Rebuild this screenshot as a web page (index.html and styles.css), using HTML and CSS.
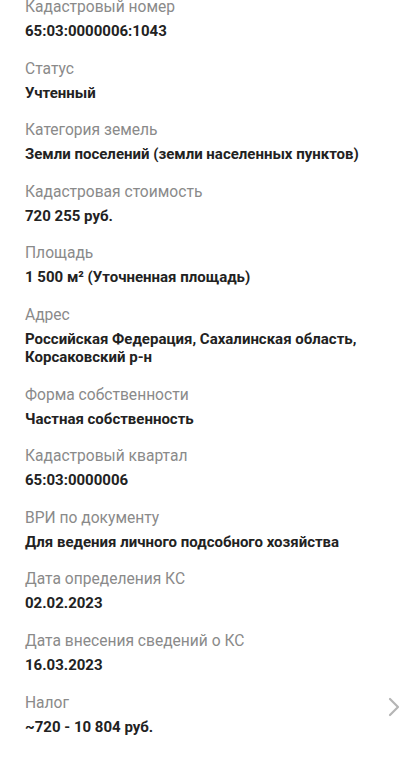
FILE: index.html
```html
<!DOCTYPE html>
<html lang="ru">
<head>
<meta charset="utf-8">
<link rel="stylesheet" href="styles.css">
</head>
<body>
<div class="list">
  <div class="item"><div class="label">Кадастровый номер</div><div class="value">65:03:0000006:1043</div></div>
  <div class="item"><div class="label">Статус</div><div class="value">Учтенный</div></div>
  <div class="item"><div class="label">Категория земель</div><div class="value">Земли поселений (земли населенных пунктов)</div></div>
  <div class="item"><div class="label">Кадастровая стоимость</div><div class="value">720 255 руб.</div></div>
  <div class="item"><div class="label">Площадь</div><div class="value">1 500 м² (Уточненная площадь)</div></div>
  <div class="item"><div class="label">Адрес</div><div class="value">Российская Федерация, Сахалинская область, Корсаковский р-н</div></div>
  <div class="item"><div class="label">Форма собственности</div><div class="value">Частная собственность</div></div>
  <div class="item"><div class="label">Кадастровый квартал</div><div class="value">65:03:0000006</div></div>
  <div class="item"><div class="label">ВРИ по документу</div><div class="value">Для ведения личного подсобного хозяйства</div></div>
  <div class="item"><div class="label">Дата определения КС</div><div class="value">02.02.2023</div></div>
  <div class="item"><div class="label">Дата внесения сведений о КС</div><div class="value">16.03.2023</div></div>
  <div class="item item-link">
    <div class="texts"><div class="label">Налог</div><div class="value">~720 - 10 804 руб.</div></div>
    <svg class="chev" width="12" height="20" viewBox="0 0 12 20"><path d="M2 2 L10 10 L2 18" fill="none" stroke="#b5b5b5" stroke-width="2.2" stroke-linecap="round" stroke-linejoin="round"/></svg>
  </div>
</div>
</body>
</html>
```
FILE: styles.css
```css
html, body {
  margin: 0;
  padding: 0;
  background: #ffffff;
}
body {
  font-family: Roboto, "Noto Sans", sans-serif;
  overflow: hidden;
}
.list {
  display: flex;
  flex-direction: column;
  gap: 18.6px;
  margin-top: -3px;
  padding: 0 14px 0 25px;
}
.item {
  display: flex;
  flex-direction: column;
}
.label {
  font-size: 15.6px;
  line-height: 20px;
  color: #8a8a8a;
  margin-bottom: 5px;
}
.value {
  font-size: 15px;
  line-height: 18px;
  font-weight: 700;
  color: #222222;
  max-width: 345px;
}
.item-link {
  flex-direction: row;
  align-items: center;
  justify-content: space-between;
}
.texts {
  display: flex;
  flex-direction: column;
}
.chev {
  margin-top: -14px;
}
```
